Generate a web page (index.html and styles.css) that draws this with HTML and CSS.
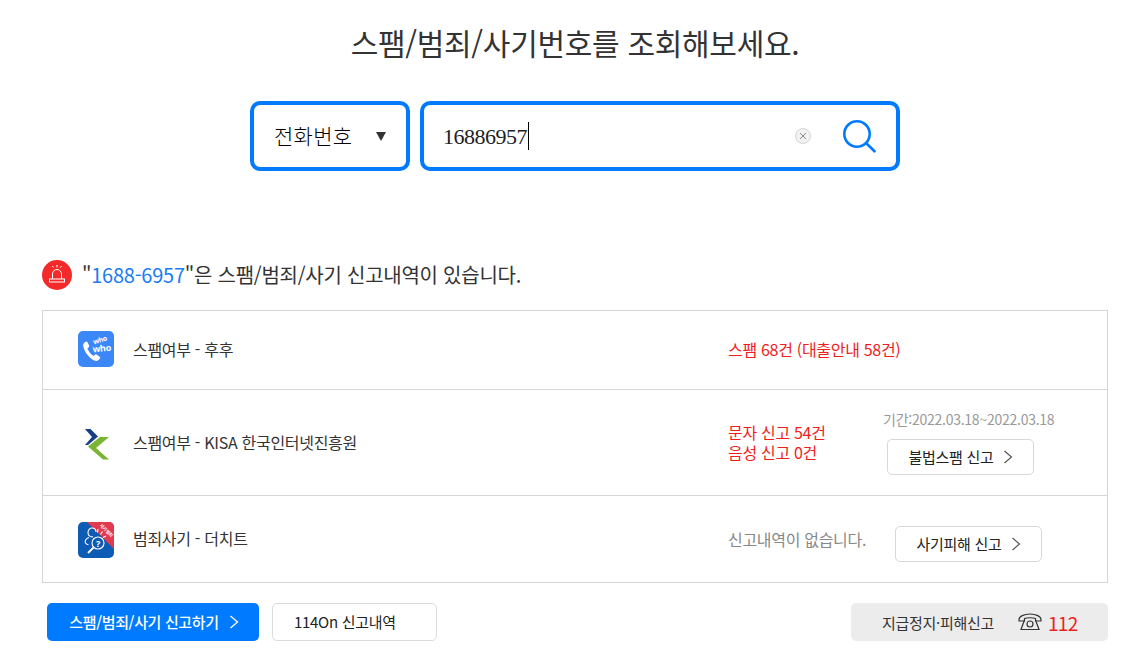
FILE: index.html
```html
<!DOCTYPE html>
<html lang="ko">
<head>
<meta charset="utf-8">
<title>스팸/범죄/사기번호 조회</title>
<link rel="stylesheet" href="styles.css">
</head>
<body>
<main class="page">
  <h1 class="title">스팸/범죄/사기번호를 조회해보세요.</h1>
  <form class="search">
    <div class="select">
      <span>전화번호</span>
      <i class="caret"></i>
    </div>
    <div class="input">
      <span class="typed">16886957</span><i class="cursor"></i>
      <svg class="clear" width="16" height="16" viewBox="0 0 16 16"><circle cx="8" cy="8" r="7.5" fill="#f1f1f1" stroke="#d4d4d4"/><path d="M5 5l6 6M11 5l-6 6" stroke="#8a8a8a" fill="none"/></svg>
      <svg class="loupe" width="33" height="33" viewBox="0 0 33 33"><circle cx="14" cy="14" r="12.700" fill="none" stroke="#007bff" stroke-width="2.600"/><path d="M23.500 23.500l8 7.800" stroke="#007bff" stroke-width="2.600" stroke-linecap="round" fill="none"/></svg>
    </div>
  </form>

  <p class="notice">
    <svg class="alarm" width="30" height="30" viewBox="0 0 30 30"><circle cx="15" cy="15" r="15" fill="#f42a2a"/><path d="M10.500 19v-5a4.500 4.500 0 0 1 9 0v5" fill="none" stroke="#fff" stroke-width="1"/><rect x="7.500" y="19" width="15" height="3" fill="none" stroke="#fff" stroke-width="1"/><path d="M15 5v2.500M10.500 6l1 1.500M19.500 6l-1 1.500" stroke="#fff" stroke-width="1" fill="none"/></svg>
    <span>"<b class="num">1688-6957</b>"은 스팸/범죄/사기 신고내역이 있습니다.</span>
  </p>

  <section class="list">
    <div class="row row-who">
      <svg class="logo" width="36" height="36" viewBox="0 0 36 36"><rect width="36" height="36" rx="5" fill="#3b87f7"/><path d="M6.500 11.500c-1.500 1-1.700 3-.8 5.500 1.700 5 5.500 9.800 10 12.200 2 1 4 1 5.200-.4l1-1.400c.5-.7.300-1.300-.4-1.800l-3-2c-.7-.4-1.300-.3-1.800.3l-1 1.200c-2.800-1.500-5.300-4.800-6.300-7.800l1.300-1c.6-.5.700-1.100.4-1.800l-1.600-3.200c-.4-.8-1-1-1.800-.6z" fill="#fff"/><text class="who who-a" x="16" y="13.500" transform="rotate(-18 16 13.500)">who</text><text class="who who-b" x="15" y="21.500" transform="rotate(-6 15 21.500)">who</text></svg>
      <div class="name">스팸여부 - 후후</div>
      <div class="result red">스팸 68건 (대출안내 58건)</div>
    </div>

    <div class="row row-kisa">
      <svg class="logo" width="36" height="36" viewBox="0 0 36 36"><path d="M7 4h5.500l7.500 7.500-10 8.500H7l7-8z" fill="#163f86"/><path d="M31 12h-9l-12 9.500 15 13h6L18 23z" fill="#79b532"/></svg>
      <div class="name">스팸여부 - KISA 한국인터넷진흥원</div>
      <div class="result red two">문자 신고 54건<br>음성 신고 0건</div>
      <div class="side">
        <div class="period">기간:2022.03.18~2022.03.18</div>
        <a class="btn">불법스팸 신고<svg class="chev" width="10" height="14" viewBox="0 0 10 14"><path d="M1.500 1l7 6-7 6" fill="none" stroke="#555" stroke-width="1.200"/></svg></a>
      </div>
    </div>

    <div class="row row-thecheat">
      <svg class="logo" width="36" height="36" viewBox="0 0 36 36"><defs><clipPath id="rr"><rect width="36" height="36" rx="5"/></clipPath></defs><g clip-path="url(#rr)"><rect width="36" height="36" fill="#0e5bb5"/><path d="M9 0h27v27z" fill="#e23a4e"/></g><text class="ribbon" x="27" y="9.500" transform="rotate(45 27 9.500)">사기 범죄</text><g fill="none" stroke="#fff" stroke-width="1.100"><path d="M15 14.800c-3 .5-5-1.500-5-4.300 0-2.600 1.800-4.500 4-4.500s4 1.600 4 4"/><path d="M11 15.500c-3 1-4.500 3.300-3.500 5.500.5 1 1.500 1.500 3 1.800"/><circle cx="20" cy="21" r="6"/><path d="M15.500 25.500l-5.500 5.500" stroke-width="1.800"/><path d="M20 7l-.5 3.500M24.500 9.500l-2 3M28 14l-3 1.500"/></g><text class="q" x="20" y="24.500">?</text></svg>
      <div class="name">범죄사기 - 더치트</div>
      <div class="result grey">신고내역이 없습니다.</div>
      <a class="btn">사기피해 신고<svg class="chev" width="10" height="14" viewBox="0 0 10 14"><path d="M1.500 1l7 6-7 6" fill="none" stroke="#555" stroke-width="1.200"/></svg></a>
    </div>
  </section>

  <footer class="actions">
    <a class="action primary">스팸/범죄/사기 신고하기<svg class="chev" width="10" height="14" viewBox="0 0 10 14"><path d="M1.500 1l7 6-7 6" fill="none" stroke="#fff" stroke-width="1.300"/></svg></a>
    <a class="action outline">114On 신고내역</a>
    <div class="emergency">
      <span>지급정지·피해신고</span>
      <svg class="phone" width="24" height="18" viewBox="0 0 24 18"><path d="M1 6.500c0-3 5-5.500 11-5.500s11 2.500 11 5.500v1.500h-5.500V5.500c-2-1-9-1-11 0V8H1z" fill="none" stroke="#333" stroke-width="1.200"/><path d="M6.500 7L3 16.500h18L17.500 7" fill="none" stroke="#333" stroke-width="1.200"/><circle cx="12" cy="11" r="3" fill="none" stroke="#333" stroke-width="1.200"/></svg>
      <b class="dial">112</b>
    </div>
  </footer>
</main>
</body>
</html>
```

FILE: styles.css
```css
* { box-sizing: border-box; }
html, body { margin: 0; padding: 0; background: #fff; }
body {
  font-family: "Noto Sans CJK KR", "Noto Sans", sans-serif;
  color: #333;
  width: 1139px;
  height: 659px;
  overflow: hidden;
}
.page { padding: 0 31px 0 42px; }
.title {
  margin: 0;
  padding-top: 19px;
  height: 101px;
  font-size: 30px;
  letter-spacing: -0.3px;
  line-height: 46px;
  font-weight: 400;
  text-align: center;
  color: #333;
}
.search { display: flex; gap: 10px; padding-left: 208px; }
.select, .input {
  height: 70px;
  border: 4px solid #007bff;
  border-radius: 10px;
  display: flex;
  align-items: center;
  background: #fff;
}
.select {
  width: 160px;
  padding-left: 20px;
  font-size: 21px;
  font-weight: 300;
  letter-spacing: 0.3px;
  color: #000;
  padding-bottom: 2px;
}
.caret {
  margin-left: 24px;
  margin-top: 2px;
  width: 0; height: 0;
  border-left: 5.5px solid transparent;
  border-right: 5.5px solid transparent;
  border-top: 9px solid #333;
}
.input { width: 480px; padding-left: 19px; }
.typed {
  font-family: "Liberation Serif", serif;
  font-size: 22px;
  letter-spacing: -0.5px;
  color: #222;
  position: relative;
  top: 1px;
}
.cursor { width: 1px; height: 28px; background: #000; margin-left: 0.5px; }
.clear { margin-left: 266px; }
.loupe { margin-left: 32px; }
.notice {
  margin: 0;
  padding-top: 89px;
  height: 139px;
  display: flex;
  align-items: flex-start;
  gap: 10px;
  font-size: 20px;
  letter-spacing: -0.25px;
  line-height: 30px;
  color: #333;
}
.num { font-weight: 400; color: #1b7cf2; }
.list { border: 1px solid #d6d6d6; width: 1066px; }
.row {
  display: flex;
  align-items: center;
  padding-left: 35px;
  border-bottom: 1px solid #d6d6d6;
  font-size: 16px;
  letter-spacing: -0.3px;
}
.row:last-child { border-bottom: 0; }
.row-who { height: 79px; }
.row-who .logo { margin-bottom: 2px; }
.row-kisa { height: 106px; }
.row-thecheat { height: 86px; }
.row-thecheat .logo { margin-top: 2px; }
.logo { flex: none; }
.name { width: 614px; padding: 0 0 2px 19px; flex: none; color: #333; line-height: 22px; }
.result { line-height: 22px; }
.red { color: #f01d1d; padding-bottom: 2px; }
.grey { color: #888; width: 167px; flex: none; }
.two { width: 155px; flex: none; line-height: 20px; }
.side { display: flex; flex-direction: column; align-items: flex-start; }
.period { font-size: 14px; letter-spacing: -0.25px; line-height: 20px; color: #999; margin-bottom: 9px; position: relative; top: -1px; }
.btn {
  width: 147px;
  height: 36px;
  border: 1px solid #d8d8d8;
  border-radius: 5px;
  display: flex;
  align-items: center;
  justify-content: center;
  gap: 10px;
  padding: 0 0 2px 1px;
  font-size: 15px;
  letter-spacing: -0.3px;
  color: #222;
  background: #fff;
}
.btn .chev { margin-top: 2px; }
.side .btn { margin-left: 4px; }
.row-thecheat .btn { margin-top: 10px; }
.actions { display: flex; padding-top: 20px; padding-left: 5px; }
.action {
  height: 38px;
  border-radius: 5px;
  display: flex;
  align-items: center;
  font-size: 15px;
  letter-spacing: -0.3px;
  padding-bottom: 2px;
}
.action .chev { margin-top: 2px; }
.primary {
  width: 212px;
  background: #007bff;
  color: #fff;
  font-weight: 500;
  justify-content: center;
  gap: 10px;
  padding-left: 2px;
  letter-spacing: -0.35px;
}
.outline {
  width: 165px;
  margin-left: 13px;
  padding-left: 21px;
  border: 1px solid #dcdcdc;
  color: #222;
}
.emergency {
  margin-left: auto;
  width: 257px;
  height: 38px;
  background: #ececec;
  border-radius: 5px;
  display: flex;
  align-items: center;
  padding-left: 31px;
  font-size: 15px;
  letter-spacing: -0.3px;
  color: #333;
}
.phone { margin-left: 24px; }
.dial { margin-left: 6px; font-weight: 400; font-size: 19px; letter-spacing: -0.6px; color: #f01d1d; }
.who { font-family: "Noto Sans", sans-serif; font-weight: 700; fill: #fff; }
.who-a { font-size: 7px; }
.who-b { font-size: 9px; }
.ribbon { font-size: 4.500px; font-weight: 700; fill: #fff; text-anchor: middle; }
.q { font-family: "Noto Sans", sans-serif; font-size: 9px; font-weight: 700; fill: #fff; text-anchor: middle; }
```
